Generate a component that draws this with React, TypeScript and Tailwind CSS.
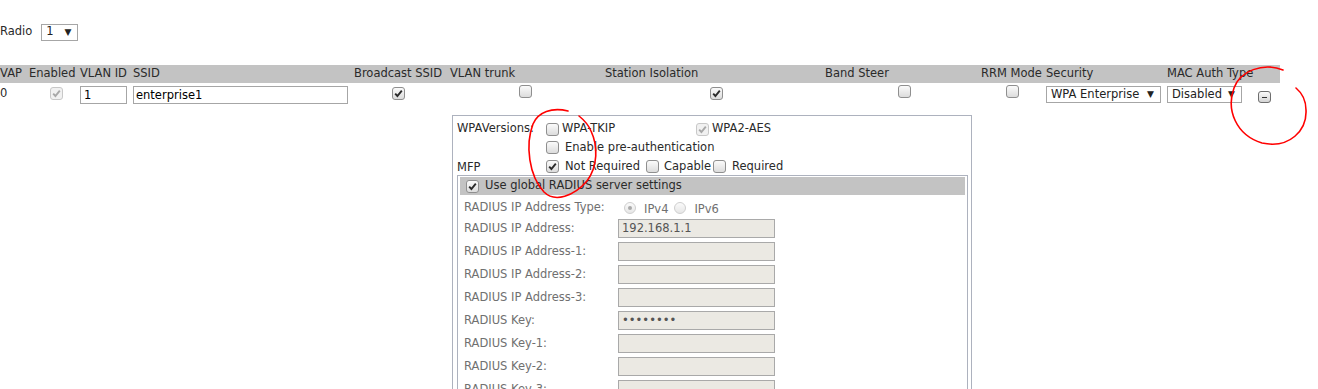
import React from "react";

function Box({ checked, disabled }: { checked?: boolean; disabled?: boolean }) {
  return (
    <span
      className={`inline-flex shrink-0 w-[13px] h-[13px] items-center justify-center rounded-[3px] border ${
        disabled
          ? "border-[#c8c8c8] bg-[#f1f1f1]"
          : "border-[#8f8f8f] bg-gradient-to-b from-[#fbfbfb] to-[#dcdcdc]"
      }`}
    >
      {checked && (
        <svg width="9" height="9" viewBox="0 0 9 9">
          <path
            d="M1.2 4.6 L3.4 7 L7.8 1.6"
            fill="none"
            stroke={disabled ? "#a8a8a8" : "#2b2b2b"}
            strokeWidth="1.9"
          />
        </svg>
      )}
    </span>
  );
}

function Radio({ checked }: { checked?: boolean }) {
  return (
    <span className="inline-flex shrink-0 w-[12px] h-[12px] items-center justify-center rounded-full border border-[#cfcfcf] bg-gradient-to-b from-[#fafafa] to-[#e6e6e6]">
      {checked && <span className="w-[4px] h-[4px] rounded-full bg-[#a9a9a9]" />}
    </span>
  );
}

function Select({ value, width }: { value: string; width: string }) {
  return (
    <span
      className={`inline-flex items-center justify-between h-[17px] border border-[#a6a6a6] bg-white pl-[4px] pr-[6px] text-[#222] ${width}`}
    >
      <span>{value}</span>
      <span className="text-[9px] leading-none">▼</span>
    </span>
  );
}

const headers = [
  ["VAP", "w-[29px]"],
  ["Enabled", "w-[51px]"],
  ["VLAN ID", "w-[53px]"],
  ["SSID", "w-[221px]"],
  ["Broadcast SSID", "w-[96px]"],
  ["VLAN trunk", "w-[155px]"],
  ["Station Isolation", "w-[220px]"],
  ["Band Steer", "w-[156px]"],
  ["RRM Mode", "w-[65px]"],
  ["Security", "w-[121px]"],
  ["MAC Auth Type", "w-[81px]"],
  ["", "w-[32px]"],
];

const radiusRows: [string, string][] = [
  ["RADIUS IP Address:", "192.168.1.1"],
  ["RADIUS IP Address-1:", ""],
  ["RADIUS IP Address-2:", ""],
  ["RADIUS IP Address-3:", ""],
  ["RADIUS Key:", "••••••••"],
  ["RADIUS Key-1:", ""],
  ["RADIUS Key-2:", ""],
  ["RADIUS Key-3:", ""],
];

export default function App() {
  return (
    <div className="relative w-[1318px] h-[389px] overflow-hidden bg-white font-['DejaVu_Sans',sans-serif] text-[11.5px] text-[#2a2a2a]">
      <div className="flex items-center h-[16px] mt-[24px]">
        <span>Radio</span>
        <span className="ml-[9px]">
          <Select value="1" width="w-[37px]" />
        </span>
      </div>

      <table className="mt-[25px] table-fixed border-collapse w-[1280px]">
        <thead>
          <tr className="bg-[#c3c3c3] h-[18px]">
            {headers.map(([h, w], i) => (
              <th key={i} className={`${w} p-0 text-left font-normal whitespace-nowrap`}>
                {h}
              </th>
            ))}
          </tr>
        </thead>
        <tbody>
          <tr className="h-[23px]">
            <td className="p-0 align-top pt-[2px]">0</td>
            <td className="p-0 text-center">
              <span className="inline-flex pl-[3px]">
                <Box checked disabled />
              </span>
            </td>
            <td className="p-0">
              <div className="w-[47px] h-[18px] border border-[#a6a6a6] pl-[3px] leading-[16px] text-black">1</div>
            </td>
            <td className="p-0">
              <div className="w-[215px] h-[18px] border border-[#a6a6a6] pl-[2px] leading-[16px] text-black">enterprise1</div>
            </td>
            <td className="p-0 text-center">
              <span className="inline-flex pr-[8px]">
                <Box checked />
              </span>
            </td>
            <td className="p-0 text-center">
              <span className="inline-flex pr-[4px]">
                <Box />
              </span>
            </td>
            <td className="p-0 text-center">
              <span className="inline-flex pl-[3px]">
                <Box checked />
              </span>
            </td>
            <td className="p-0 text-center">
              <span className="inline-flex pl-[3px]">
                <Box />
              </span>
            </td>
            <td className="p-0 text-center">
              <span className="inline-flex pr-[2px]">
                <Box />
              </span>
            </td>
            <td className="p-0">
              <Select value="WPA Enterprise" width="w-[115px]" />
            </td>
            <td className="p-0">
              <Select value="Disabled" width="w-[75px]" />
            </td>
            <td className="p-0">
              <span className="ml-[10px] inline-flex w-[13px] h-[12px] items-center justify-center rounded-[3px] border border-[#6e6e6e] bg-gradient-to-b from-[#fafafa] to-[#d4d4d4]">
                <span className="w-[5px] h-[1px] bg-[#333]" />
              </span>
            </td>
          </tr>
          <tr>
            <td colSpan={5} className="p-0" />
            <td colSpan={7} className="p-0 align-top">
              <div className="ml-[2px] mt-[9px] w-[520px] h-[300px] border border-[#adb2be] pt-[3px]">
                <div className="flex pl-[4px]">
                  <div className="w-[89px] h-[18px] leading-[18px]">WPAVersions:</div>
                  <div className="flex items-center h-[18px] pt-[2px]">
                    <Box />
                    <span className="ml-[3px] w-[134px]">WPA-TKIP</span>
                    <Box checked disabled />
                    <span className="ml-[3px]">WPA2-AES</span>
                  </div>
                </div>
                <div className="flex items-center h-[21px] pl-[93px]">
                  <Box />
                  <span className="ml-[6px]">Enable pre-authentication</span>
                </div>
                <div className="flex items-center h-[17px] pl-[4px]">
                  <span className="w-[89px] pt-[3px]">MFP</span>
                  <Box checked />
                  <span className="ml-[6px]">Not Required</span>
                  <span className="ml-[6px] inline-flex">
                    <Box />
                  </span>
                  <span className="ml-[5px]">Capable</span>
                  <span className="ml-[2px] inline-flex">
                    <Box />
                  </span>
                  <span className="ml-[6px]">Required</span>
                </div>

                <div className="ml-[4px] w-[511px] h-[280px] border border-[#adb2be] pt-[1px] pl-[1px] pr-[2px]">
                  <div className="flex items-center h-[18px] bg-[#c3c3c3] pl-[6px] ml-[1px]">
                    <Box checked />
                    <span className="ml-[6px]">Use global RADIUS server settings</span>
                  </div>
                  <div className="pl-[5px] text-[#707070]">
                    <div className="flex items-center h-[22px] pt-[4px]">
                      <span className="w-[160px]">RADIUS IP Address Type:</span>
                      <Radio checked />
                      <span className="ml-[8px] mt-[3px]">IPv4</span>
                      <span className="ml-[6px] inline-flex">
                        <Radio />
                      </span>
                      <span className="ml-[8px] mt-[3px]">IPv6</span>
                    </div>
                    {radiusRows.map(([label, val]) => (
                      <div key={label} className="flex items-center h-[23px]">
                        <span className="w-[154px]">{label}</span>
                        <div className="w-[157px] h-[19px] border border-[#a9a9a9] bg-[#ebe9e3] pl-[3px] leading-[17px] text-[#555]">
                          {val}
                        </div>
                      </div>
                    ))}
                  </div>
                </div>
              </div>
            </td>
          </tr>
        </tbody>
      </table>

      <svg className="pointer-events-none absolute inset-0" width="1318" height="389">
        <path
          d="M568 111 C552 107 538 112 533 124 C525 145 529 176 544 192 C555 203 574 196 587 181 C598 166 598 146 591 131 C588 124 584 120 579 116"
          fill="none"
          stroke="#ff0000"
          strokeWidth="1.6"
          strokeLinecap="round"
        />
        <path
          d="M1283 70 C1263 62 1240 71 1234 88 C1226 110 1236 135 1262 143 C1290 149 1307 130 1306 110 C1306 100 1302 93 1296 88"
          fill="none"
          stroke="#ff0000"
          strokeWidth="1.6"
          strokeLinecap="round"
        />
      </svg>
    </div>
  );
}
